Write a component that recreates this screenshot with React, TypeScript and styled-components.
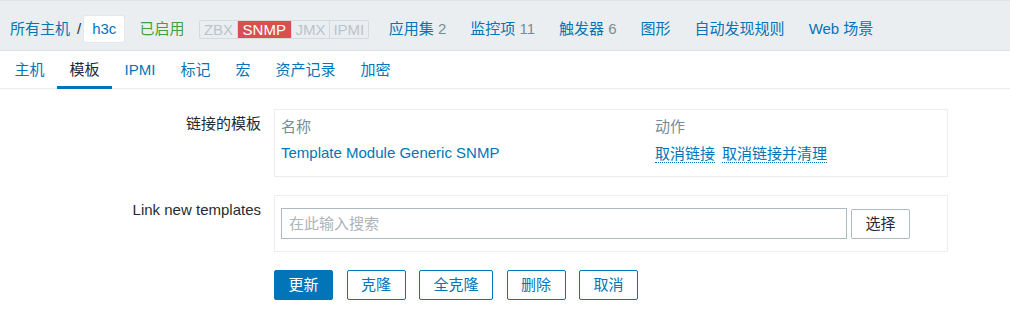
import React from "react";
import styled, { createGlobalStyle } from "styled-components";

const GlobalStyle = createGlobalStyle`
  html, body {
    margin: 0;
    padding: 0;
    background: #ffffff;
  }

  body {
    font-family: "Liberation Sans", Arial, "Noto Sans CJK SC", sans-serif;
    font-size: 15px;
    line-height: 17.5px;
    color: #1f2c33;
  }
`;

const blue = "#0275b8";
const grey = "#768d99";

const Header = styled.header`
  display: flex;
  align-items: center;
  height: 26px;
  padding: 15px 0 8px 10px;
  background: #ebeef0;
  border-top: 1px solid #dfe4e7;
  border-bottom: 1px solid #dfe4e7;
`;

const Crumbs = styled.div`
  display: flex;
  align-items: center;

  .link {
    color: ${blue};
  }

  .sep {
    margin: 0 3px 0 7px;
    color: #1f2c33;
  }

  .current {
    display: flex;
    align-items: center;
    height: 26px;
    padding: 0 8px;
    background: #ffffff;
    border-radius: 2px;
    box-shadow: 0 0 0 1px #e4e8eb;
    color: ${blue};
  }
`;

const Enabled = styled.span`
  margin-left: 15px;
  color: #429e47;
`;

const Status = styled.div`
  display: flex;
  margin-left: 15px;
  height: 17px;
  border: 1px solid #d4dbde;
  border-radius: 2px;
  line-height: 17px;
`;

const StatusItem = styled.span<{ $active?: boolean }>`
  color: ${(p) => (p.$active ? "#ffffff" : "#b8c5cc")};
  background: ${(p) => (p.$active ? "#d84f4f" : "transparent")};
  padding: ${(p) => (p.$active ? "0 5px" : "0 3.5px")};

  & + & {
    border-left: 1px solid #d4dbde;
  }
`;

const Nav = styled.nav`
  display: flex;
  gap: 24px;
  margin-left: 20px;

  a {
    color: ${blue};
    text-decoration: none;
  }

  .count {
    color: ${grey};
  }
`;

const Tabs = styled.ul`
  display: flex;
  margin: 0;
  padding: 0 0 0 2px;
  list-style: none;
  height: 37px;
  border-bottom: 1px solid #ebeef0;
`;

const Tab = styled.li<{ $active?: boolean }>`
  display: flex;
  align-items: center;
  padding: 3px 12.5px 0;
  margin-bottom: -1px;
  color: ${(p) => (p.$active ? "#1f2c33" : blue)};
  border-bottom: 3px solid ${(p) => (p.$active ? blue : "transparent")};
`;

const Form = styled.div`
  display: grid;
  grid-template-columns: 261px 674px;
  column-gap: 13px;
  row-gap: 18px;
  padding-top: 20px;
`;

const Label = styled.div<{ $top: number }>`
  text-align: right;
  padding-top: ${(p) => p.$top}px;
`;

const FieldBox = styled.div<{ $pad: string }>`
  border: 1px solid #ebeef0;
  padding: ${(p) => p.$pad};
`;

const LinkedTable = styled.div`
  display: grid;
  grid-template-columns: 374px auto;

  .head {
    height: 25px;
    line-height: 25px;
    color: ${grey};
  }

  .row {
    height: 27px;
    display: flex;
    align-items: center;
    gap: 7px;
  }

  .name {
    color: ${blue};
  }
`;

const ActionLink = styled.span`
  color: ${blue};
  border-bottom: 1px dotted ${blue};
  line-height: 17px;
  margin-top: 3px;
`;

const SearchRow = styled.div`
  display: flex;
  gap: 4px;
`;

const SearchInput = styled.div`
  box-sizing: border-box;
  width: 566px;
  height: 31px;
  padding: 0 7px;
  display: flex;
  align-items: center;
  border: 1px solid #acbbc2;
  color: #acb4b9;
`;

const Button = styled.button<{ $primary?: boolean; $plain?: boolean }>`
  box-sizing: border-box;
  height: 30px;
  margin-top: ${(p) => (p.$plain ? "1px" : "0")};
  padding: 0 13.5px;
  font: inherit;
  border-radius: 2px;
  border: 1px solid ${(p) => (p.$plain ? "#acbbc2" : blue)};
  background: ${(p) => (p.$primary ? blue : "#ffffff")};
  color: ${(p) => (p.$primary ? "#ffffff" : p.$plain ? "#1f2c33" : blue)};
  cursor: pointer;
`;

const Actions = styled.div`
  grid-column: 2;
  display: flex;
  gap: 13.5px;
`;

const navItems: { label: string; count?: string }[] = [
  { label: "应用集", count: "2" },
  { label: "监控项", count: "11" },
  { label: "触发器", count: "6" },
  { label: "图形" },
  { label: "自动发现规则" },
  { label: "Web 场景" },
];

const tabs = ["主机", "模板", "IPMI", "标记", "宏", "资产记录", "加密"];

export default function App() {
  return (
    <>
      <GlobalStyle />
      <Header>
        <Crumbs>
          <span className="link">所有主机</span>
          <span className="sep">/</span>
          <span className="current">h3c</span>
        </Crumbs>
        <Enabled>已启用</Enabled>
        <Status>
          <StatusItem>ZBX</StatusItem>
          <StatusItem $active>SNMP</StatusItem>
          <StatusItem>JMX</StatusItem>
          <StatusItem>IPMI</StatusItem>
        </Status>
        <Nav>
          {navItems.map((item) => (
            <a key={item.label}>
              {item.label}
              {item.count && <span className="count"> {item.count}</span>}
            </a>
          ))}
        </Nav>
      </Header>

      <Tabs>
        {tabs.map((t) => (
          <Tab key={t} $active={t === "模板"}>
            {t}
          </Tab>
        ))}
      </Tabs>

      <Form>
        <Label $top={6}>链接的模板</Label>
        <FieldBox $pad="4px 6px 10px">
          <LinkedTable>
            <div className="head">名称</div>
            <div className="head">动作</div>
            <div className="row">
              <span className="name">Template Module Generic SNMP</span>
            </div>
            <div className="row">
              <ActionLink>取消链接</ActionLink>
              <ActionLink>取消链接并清理</ActionLink>
            </div>
          </LinkedTable>
        </FieldBox>

        <Label $top={6}>Link new templates</Label>
        <FieldBox $pad="12px 6px">
          <SearchRow>
            <SearchInput>在此输入搜索</SearchInput>
            <Button $plain>选择</Button>
          </SearchRow>
        </FieldBox>

        <Actions>
          <Button $primary>更新</Button>
          <Button>克隆</Button>
          <Button>全克隆</Button>
          <Button>删除</Button>
          <Button>取消</Button>
        </Actions>
      </Form>
    </>
  );
}
